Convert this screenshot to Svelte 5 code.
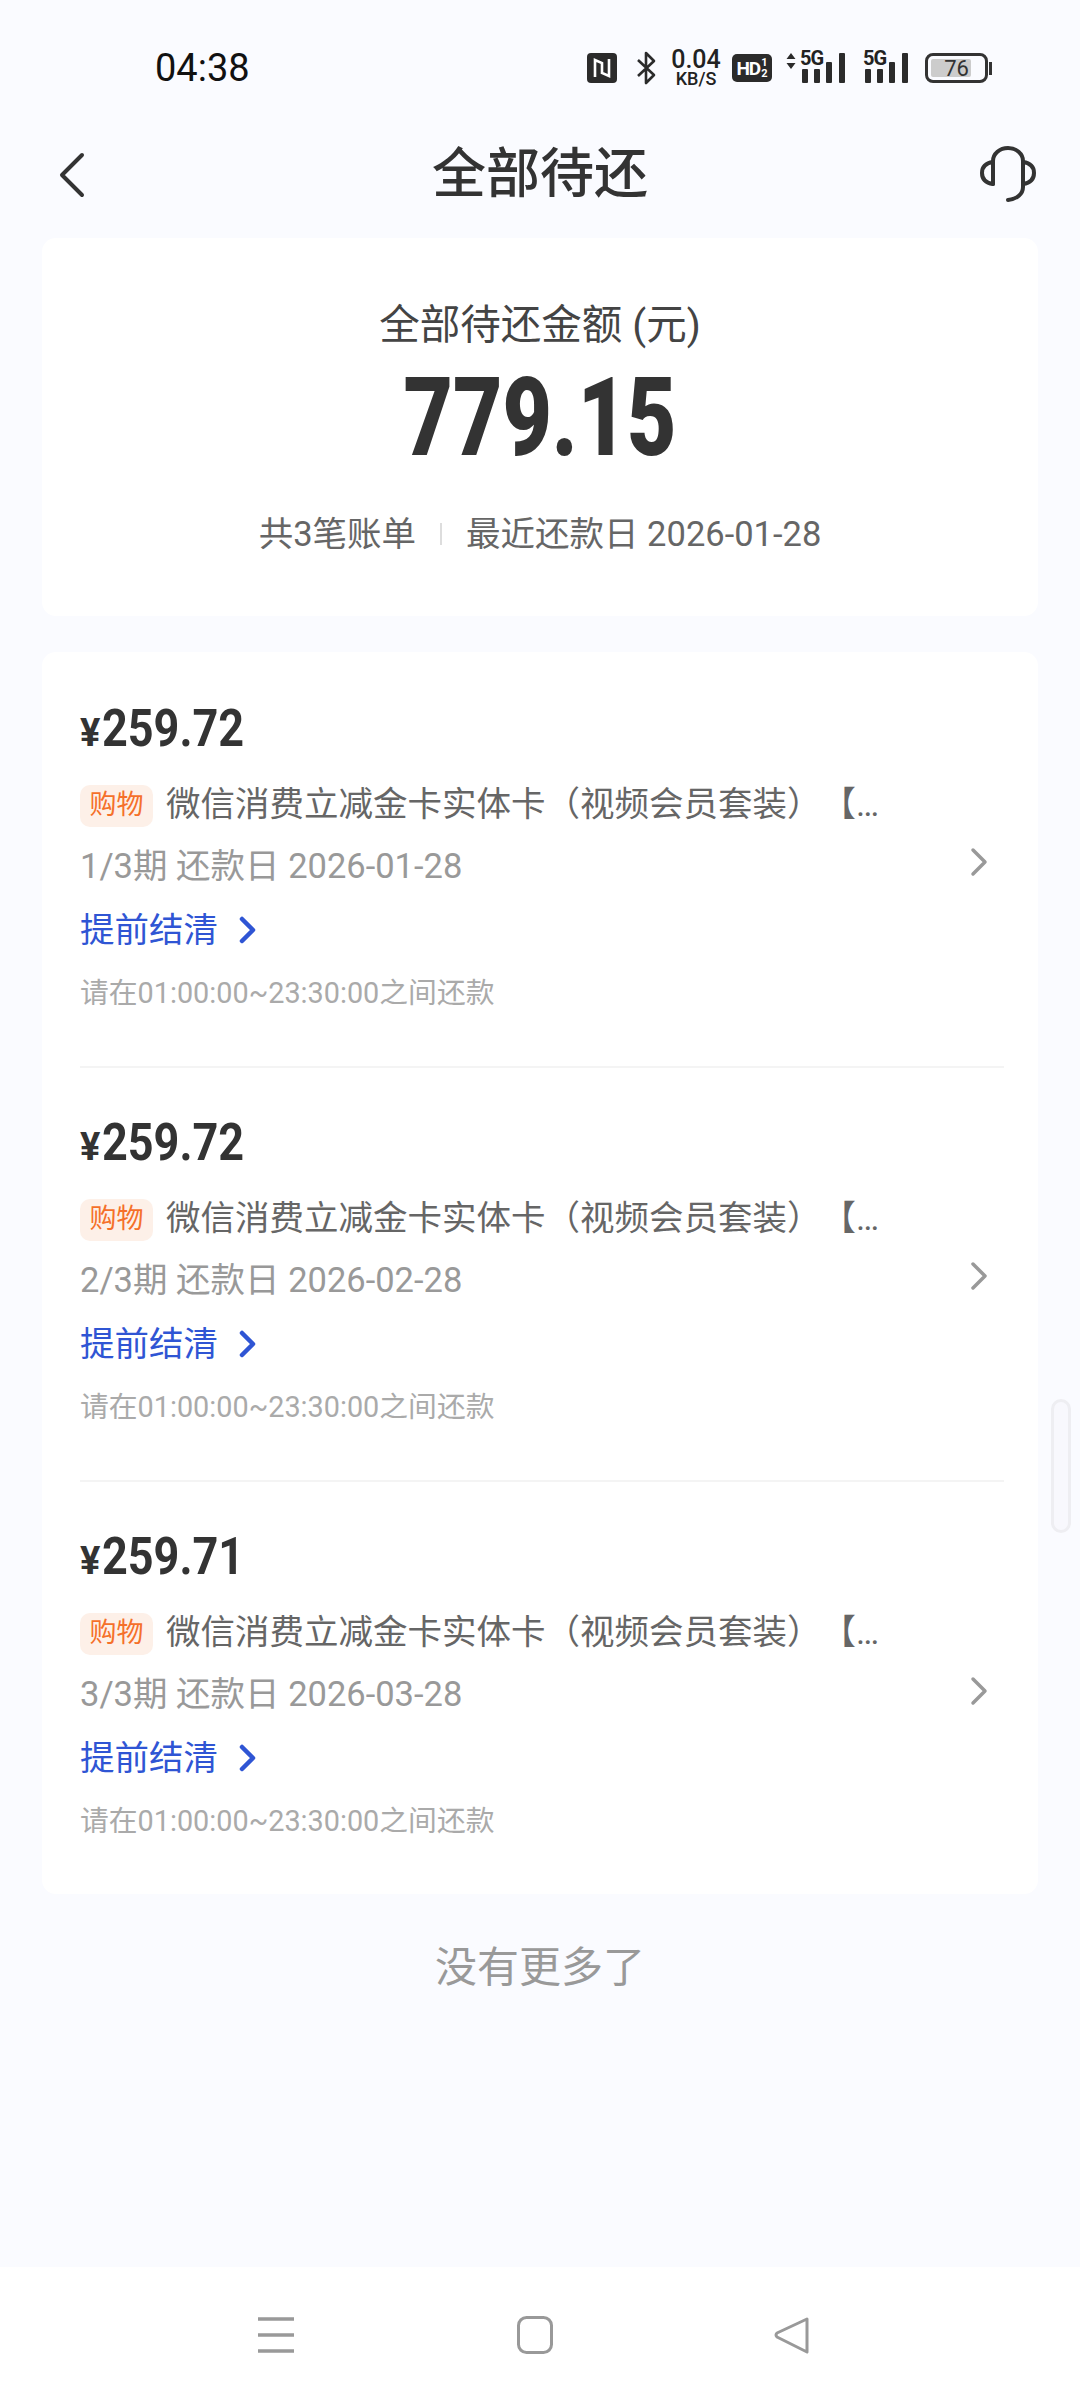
<script>
  const items = [
    { amount: '259.72', period: '1/3期 还款日 2026-01-28' },
    { amount: '259.72', period: '2/3期 还款日 2026-02-28' },
    { amount: '259.71', period: '3/3期 还款日 2026-03-28' }
  ];
</script>

<div class="screen">
  <div class="status">
    <span class="time">04:38</span>
    <div class="sysicons">
      <svg class="nfc" width="30" height="30" viewBox="0 0 30 30"><rect width="30" height="30" rx="4" fill="#2b2b2b"/><path d="M8 24V7l7 3v11M22 6v17l-7-3V12" fill="none" stroke="#fff" stroke-width="2.6"/></svg>
      <svg class="bt" width="20" height="34" viewBox="0 0 20 34"><path d="M2 9l16 15-8 8V2l8 8L2 25" fill="none" stroke="#2b2b2b" stroke-width="2.6" stroke-linejoin="round"/></svg>
      <div class="speed"><span class="num">0.04</span><span class="unit">KB/S</span></div>
      <div class="hd"><span class="hdt">HD</span><span class="frac"><i>1</i><i>2</i></span></div>
      <div class="net first">
        <svg class="arrows" width="10" height="16" viewBox="0 0 10 16"><path d="M5 0l4.500 6h-9zM5 16l4.500-6h-9z" fill="#2b2b2b"/></svg>
        <div class="sig"><span class="g">5G</span><svg width="43" height="30" viewBox="0 0 43 30"><rect x="0" y="16" width="6" height="14" rx="1"/><rect x="12" y="16" width="6" height="14" rx="1"/><rect x="24" y="9" width="6" height="21" rx="1"/><rect x="37" y="0" width="6" height="30" rx="1"/></svg></div>
      </div>
      <div class="net">
        <div class="sig"><span class="g">5G</span><svg width="43" height="30" viewBox="0 0 43 30"><rect x="0" y="16" width="6" height="14" rx="1"/><rect x="12" y="16" width="6" height="14" rx="1"/><rect x="24" y="9" width="6" height="21" rx="1"/><rect x="37" y="0" width="6" height="30" rx="1"/></svg></div>
      </div>
      <div class="batt"><div class="cell"><div class="fill"></div><span class="pct">76</span></div><div class="nub"></div></div>
    </div>
  </div>

  <div class="nav">
    <svg class="back" width="28" height="46" viewBox="0 0 28 46"><path d="M24 3L4 23l20 20" fill="none" stroke="#333" stroke-width="4" stroke-linecap="round" stroke-linejoin="round"/></svg>
    <h1>全部待还</h1>
    <svg class="help" width="58" height="58" viewBox="20 15 58 58"><g fill="none" stroke="#333" stroke-width="4" stroke-linecap="round"><path d="M33 53V30a15 13 0 0 1 30 0v26c0 7-6 12-15 13"/><path d="M33 31c-7 1-11 5-11 11s4 10 11 11"/><path d="M63 31c7 1 11 5 11 11s-4 10-11 11"/></g></svg>
  </div>

  <div class="card summary">
    <div class="label">全部待还金额 (元)</div>
    <div class="total">779.15</div>
    <div class="info"><span>共3笔账单</span><i class="sep"></i><span>最近还款日 2026-01-28</span></div>
  </div>

  <div class="card list">
    {#each items as item, i}
      <div class="item" class:last={i === items.length - 1}>
        <div class="main">
          <div class="amt"><span class="yen">¥</span><span class="digits">{item.amount}</span></div>
          <div class="line"><span class="tag">购物</span><span class="name">微信消费立减金卡实体卡（视频会员套装）【京东自营】</span></div>
          <div class="period">{item.period}</div>
          <div class="link"><span>提前结清</span><svg width="18" height="28" viewBox="0 0 18 28"><path d="M3 3l11 11L3 25" fill="none" stroke="#2f55d4" stroke-width="4.500" stroke-linecap="round" stroke-linejoin="round"/></svg></div>
          <div class="hint">请在01:00:00~23:30:00之间还款</div>
        </div>
        <svg class="go" width="18" height="30" viewBox="0 0 18 30"><path d="M3 3l12 12L3 27" fill="none" stroke="#999" stroke-width="3.500" stroke-linecap="round" stroke-linejoin="round"/></svg>
      </div>
    {/each}
  </div>

  <div class="more">没有更多了</div>

  <div class="scrollthumb"></div>

  <div class="bottom">
    <svg width="38" height="38" viewBox="0 0 38 38"><path d="M1 3h36M1 19h36M1 35h36" stroke="#999" stroke-width="3.500"/></svg>
    <svg width="36" height="38" viewBox="0 0 36 38"><rect x="1.500" y="1.500" width="33" height="35" rx="8" fill="none" stroke="#999" stroke-width="3"/></svg>
    <svg width="36" height="38" viewBox="0 0 36 38"><path d="M33 3L3 17q-2 2 0 4l30 15z" fill="none" stroke="#999" stroke-width="3" stroke-linejoin="round"/></svg>
  </div>
</div>

<style>
  :global(body) { margin: 0; background: #fafbff; }
  .screen {
    position: relative;
    width: 1080px;
    height: 2400px;
    overflow: hidden;
    background: #fafbff;
    display: flex;
    flex-direction: column;
    font-family: Roboto, "Noto Sans CJK SC", sans-serif;
    color: #333;
    text-spacing-trim: space-all;
  }
  .status {
    height: 112px;
    flex: none;
    box-sizing: border-box;
    padding: 44px 88px 0 155px;
    display: flex;
    justify-content: space-between;
    align-items: flex-start;
    color: #222;
  }
  .time { font-size: 38px; line-height: 46px; font-weight: 400; color: #111; margin-top: 1px; }
  .sysicons { display: flex; align-items: center; height: 40px; margin-top: 4px; }
  .bt { margin-left: 19px; }
  .speed { margin-left: 14px; width: 52px; display: flex; flex-direction: column; align-items: center; font-weight: 500; }
  .num { font-size: 25px; line-height: 21px; }
  .unit { font-size: 18px; line-height: 17px; }
  .hd { margin-left: 10px; width: 40px; height: 28px; border-radius: 5px; background: #2b2b2b; color: #fff; display: flex; align-items: center; justify-content: center; font-weight: 700; }
  .hdt { font-size: 19px; letter-spacing: -1px; }
  .frac { display: flex; flex-direction: column; margin-left: 1px; }
  .frac i { font-style: normal; font-size: 11px; line-height: 11px; }
  .net { display: flex; align-items: flex-start; }
  .first { margin-left: 14px; }
  .arrows { margin-right: 3px; }
  .net:not(.first) { margin-left: 17px; }
  .sig { position: relative; width: 46px; height: 30px; display: flex; justify-content: flex-end; fill: #2b2b2b; }
  .g { position: absolute; left: 1px; top: -5px; font-size: 20px; line-height: 20px; font-weight: 700; letter-spacing: -1px; color: #222; }
  .batt { margin-left: 17px; display: flex; align-items: center; }
  .cell { position: relative; box-sizing: border-box; width: 63px; height: 30px; border: 3px solid #333; border-radius: 8px; display: flex; align-items: center; justify-content: center; }
  .fill { position: absolute; left: 3px; top: 3px; bottom: 3px; width: 40px; background: #ccc; border-radius: 2px; }
  .pct { position: relative; font-size: 22px; font-weight: 400; color: #333; }
  .nub { width: 3px; height: 13px; margin-left: 1px; background: #333; }

  .nav {
    flex: none;
    height: 126px;
    display: grid;
    grid-template-columns: 1fr auto 1fr;
    align-items: center;
    padding: 0 42px;
  }
  .back { margin-left: 16px; }
  .help { justify-self: end; }
  .nav h1 { margin: 0; font-size: 54px; font-weight: 500; color: #333; line-height: 70px; }

  .card { margin: 0 42px; background: #fff; border-radius: 14px; flex: none; }
  .summary { height: 378px; display: flex; flex-direction: column; align-items: center; }
  .label { margin-top: 60px; font-size: 40.5px; line-height: 54px; color: #444; }
  .total { margin-top: 6px; font-size: 110px; line-height: 120px; font-weight: 900; color: #333; transform: scaleX(.775); }
  .info { margin-top: 33px; font-size: 34.5px; line-height: 46px; color: #666; display: flex; align-items: center; }
  .sep { width: 2px; height: 22px; background: #ddd; margin: 0 24px; }

  .list { margin-top: 36px; height: 1242px; padding: 0 34px 0 38px; box-sizing: border-box; }
  .item { height: 416px; margin-bottom: -2px; box-sizing: border-box; border-bottom: 2px solid #f4f4f4; display: flex; align-items: center; justify-content: space-between; padding-right: 16px; }
  .item.last { border-bottom: none; }
  .main { min-width: 0; flex: 1; padding-top: 48px; height: 100%; box-sizing: border-box; }
  .amt { display: flex; align-items: baseline; font-size: 52px; line-height: 58px; font-weight: 700; color: #333; }
  .yen { font-size: 38px; margin-right: 2px; }
  .digits { display: inline-block; transform: scaleX(.865); transform-origin: left center; }
  .line { margin-top: 22px; display: flex; align-items: center; height: 44px; }
  .tag { flex: none; width: 73px; height: 42px; line-height: 40px; text-align: center; border-radius: 10px; background: #fdf0e8; color: #f5702a; font-size: 27px; }
  .name { margin-left: 13px; margin-bottom: 10px; width: 716px; font-size: 34.5px; color: #666; white-space: nowrap; overflow: hidden; text-overflow: ellipsis; }
  .period { margin-top: 15px; font-size: 34.5px; line-height: 46px; color: #999; }
  .link { margin-top: 18px; display: flex; align-items: center; font-size: 34.5px; line-height: 46px; color: #2f55d4; }
  .link svg { margin-left: 21px; }
  .hint { margin-top: 20px; font-size: 28.8px; line-height: 40px; color: #aaa; }
  .go { flex: none; margin-top: 6px; }

  .more { margin-top: 46px; text-align: center; font-size: 42px; line-height: 56px; color: #999; }

  .scrollthumb {
    position: absolute;
    left: 1051px;
    top: 1399px;
    width: 20px;
    height: 134px;
    box-sizing: border-box;
    border: 3px solid #eeeef2;
    border-radius: 10px;
    background: #f8f8fd;
  }

  .bottom {
    position: absolute;
    left: 0;
    right: 0;
    bottom: 0;
    height: 133px;
    background: #fff;
    box-sizing: border-box;
    padding: 49px 270px 0 257px;
    display: flex;
    justify-content: space-between;
    align-items: flex-start;
  }
</style>
